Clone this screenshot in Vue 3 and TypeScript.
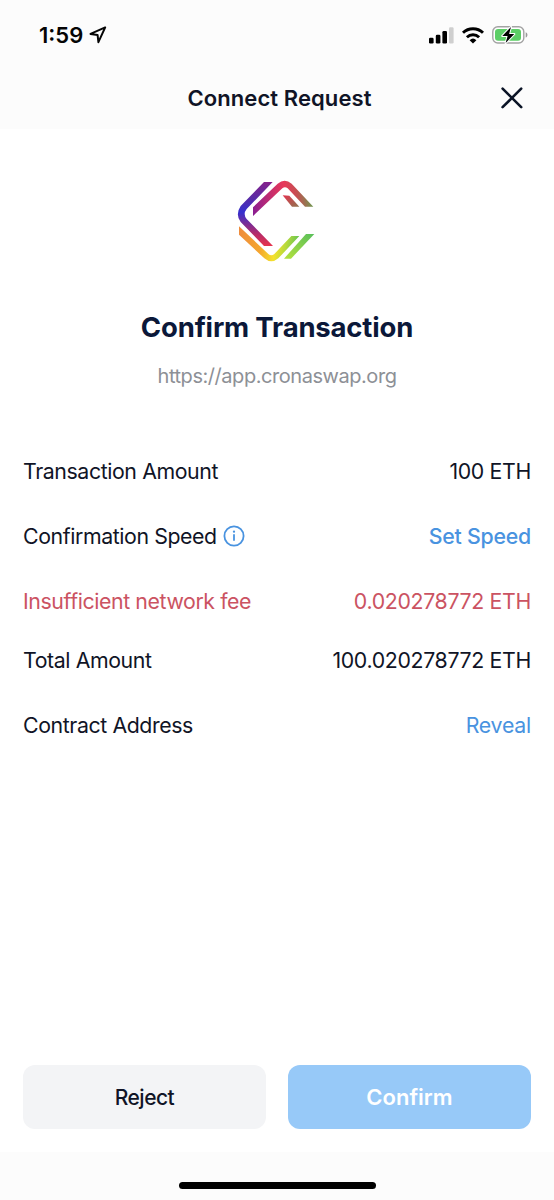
<script setup lang="ts">
interface Row {
  id: string
  label: string
  value: string
  kind?: 'link' | 'error'
  strong?: boolean
  info?: boolean
}

const rows: Row[] = [
  { id: 'amount', label: 'Transaction Amount', value: '100 ETH' },
  { id: 'speed', label: 'Confirmation Speed', value: 'Set Speed', kind: 'link', strong: true, info: true },
  { id: 'fee', label: 'Insufficient network fee', value: '0.020278772 ETH', kind: 'error' },
  { id: 'total', label: 'Total Amount', value: '100.020278772 ETH' },
  { id: 'contract', label: 'Contract Address', value: 'Reveal', kind: 'link' },
]
</script>

<template>
  <div class="screen">
    <header class="top">
      <div class="status">
        <div class="clock">
          <span class="time">1:59</span>
          <svg class="location" viewBox="0 0 18 18">
            <path d="M16.2 1.4 1.5 7.9l7.1 1.1.8 7.2z" />
          </svg>
        </div>
        <div class="indicators">
          <svg class="signal" viewBox="0 0 25 17">
            <rect x="0" y="10.8" width="4.6" height="5.7" rx="1.3" />
            <rect x="6.8" y="7.8" width="4.6" height="8.7" rx="1.3" />
            <rect x="13.4" y="4" width="4.6" height="12.5" rx="1.3" />
            <rect class="dim" x="20" y="0.3" width="4.6" height="16.2" rx="1.3" />
          </svg>
          <svg class="wifi" viewBox="0 0 24 17">
            <path class="arc" d="M2 5.8a14.3 14.3 0 0 1 20 0M5.9 10.2a8.8 8.8 0 0 1 12.2 0" />
            <path d="M8.6 13.2a5 5 0 0 1 6.8 0L12 16.6z" />
          </svg>
          <svg class="battery" viewBox="0 0 36 18">
            <rect class="shell" x="0.8" y="0.8" width="31" height="16.2" rx="5" />
            <rect class="charge" x="3" y="3" width="26" height="11.8" rx="3" />
            <path class="cap" d="M33.7 6.2c2.3.8 2.3 4.6 0 5.4z" />
            <path class="bolt" d="M19 .9 10.3 10h5.3l-2 7.1L22.3 8h-5.2z" />
          </svg>
        </div>
      </div>
      <div class="title-bar">
        <h1 class="title">Connect Request</h1>
        <svg class="close" viewBox="0 0 22 22">
          <path d="M1.6 1.6l18.6 18.6M20.2 1.6 1.6 20.2" />
        </svg>
      </div>
    </header>

    <main class="content">
      <svg class="logo" viewBox="0 0 330 330">
        <defs>
          <linearGradient id="left" gradientUnits="userSpaceOnUse" x1="145" y1="51" x2="145" y2="243">
            <stop offset="0" stop-color="#85218b" />
            <stop offset="0.25" stop-color="#5a2ba5" />
            <stop offset="0.47" stop-color="#3530cf" />
            <stop offset="0.66" stop-color="#7b2b94" />
            <stop offset="0.82" stop-color="#b82c68" />
            <stop offset="1" stop-color="#e6344d" />
          </linearGradient>
          <linearGradient id="upper" gradientUnits="userSpaceOnUse" x1="99" y1="140" x2="280" y2="120">
            <stop offset="0" stop-color="#8a1d91" />
            <stop offset="0.3" stop-color="#c12c70" />
            <stop offset="0.55" stop-color="#e8385a" />
            <stop offset="0.75" stop-color="#c54f52" />
            <stop offset="1" stop-color="#6c9a50" />
          </linearGradient>
          <linearGradient id="inner" x1="0" y1="0" x2="1" y2="1">
            <stop offset="0" stop-color="#e2324e" />
            <stop offset="1" stop-color="#8f7550" />
          </linearGradient>
          <linearGradient id="lower" gradientUnits="userSpaceOnUse" x1="57" y1="200" x2="238" y2="225">
            <stop offset="0" stop-color="#ee8b3d" />
            <stop offset="0.38" stop-color="#f5a62f" />
            <stop offset="0.62" stop-color="#f4e12d" />
            <stop offset="0.8" stop-color="#b5d93b" />
            <stop offset="1" stop-color="#62c354" />
          </linearGradient>
          <linearGradient id="tail" x1="0" y1="1" x2="1" y2="0">
            <stop offset="0" stop-color="#b6e23b" />
            <stop offset="1" stop-color="#58bf5b" />
          </linearGradient>
        </defs>
        <path fill="url(#left)" d="M132 51h26L80 132q-12 15 0 30l79 81h-27L62 171q-17-23 0-48z" />
        <path fill="url(#upper)" d="M99 153v-26l74-71q21-18 42 0l65 69h-25l-52-55q-8-7-16 0z" />
        <path fill="url(#inner)" d="M188 91l20 1 30 33h-22z" />
        <path fill="url(#lower)" d="M57 184v25l76 71q21 18 42 0l63-67h-24l-51 54q-9 8-18 0z" />
        <path fill="url(#tail)" d="M258 207h25l-70 74h-21z" />
      </svg>
      <h2 class="headline">Confirm Transaction</h2>
      <p class="origin">https://app.cronaswap.org</p>

      <dl class="details">
        <div v-for="row in rows" :key="row.id" class="row" :class="[row.id, row.kind]">
          <dt class="label">
            <span>{{ row.label }}</span>
            <svg v-if="row.info" class="info" viewBox="0 0 22 22">
              <circle class="ring" cx="11" cy="11" r="9.6" />
              <circle cx="11" cy="6.7" r="1.15" />
              <path class="stem" d="M11 9.3v6.5" />
            </svg>
          </dt>
          <dd class="value" :class="{ strong: row.strong }">{{ row.value }}</dd>
        </div>
      </dl>

      <div class="actions">
        <button type="button" class="button reject">Reject</button>
        <button type="button" class="button confirm">Confirm</button>
      </div>
    </main>

    <footer class="bottom"><span class="home"></span></footer>
  </div>
</template>

<style>
body {
  margin: 0;
  background: #fff;
}
</style>

<style scoped>
.screen {
  width: 554px;
  height: 1200px;
  display: flex;
  flex-direction: column;
  background: #fff;
  color: #101426;
  font-family: Inter, "Liberation Sans", sans-serif;
  overflow: hidden;
}
.top {
  height: 129px;
  background: #fcfcfc;
}
.status {
  height: 70px;
  display: flex;
  justify-content: space-between;
  box-sizing: border-box;
  padding: 0 26px 0 39px;
}
.clock,
.indicators {
  display: flex;
  align-items: center;
}
.time {
  width: 50px;
  font-size: 22px;
  line-height: 70px;
  font-weight: 600;
  color: #050505;
  white-space: nowrap;
}
.location {
  width: 18px;
  height: 18px;
  fill: none;
  stroke: #050505;
  stroke-width: 2;
  stroke-linejoin: round;
}
.signal {
  width: 25px;
  height: 17px;
  margin-right: 7px;
}
.signal .dim {
  fill: #cfcfcf;
}
.wifi {
  width: 24px;
  height: 17px;
  margin-right: 7px;
}
.arc {
  fill: none;
  stroke: #000;
  stroke-width: 2.9;
}
.battery {
  width: 36px;
  height: 18px;
  overflow: visible;
}
.shell {
  fill: #fff;
  stroke: #a3a3a3;
  stroke-width: 1.4;
}
.charge {
  fill: #5cce66;
}
.cap {
  fill: #9a9a9a;
}
.bolt {
  fill: #000;
  stroke: #fff;
  stroke-width: 2;
  paint-order: stroke;
  stroke-linejoin: round;
}
.title-bar {
  height: 55px;
  display: grid;
  grid-template-columns: 1fr auto 1fr;
  align-items: center;
  padding: 0 31.5px;
}
.title {
  grid-column: 2;
  margin: 0;
  font-size: 22px;
  line-height: 30px;
  font-weight: 600;
  letter-spacing: 0.08px;
  white-space: nowrap;
  margin-left: 5px;
}
.close {
  width: 22px;
  height: 22px;
  justify-self: end;
  fill: none;
  stroke: #0b1426;
  stroke-width: 2.6;
  stroke-linecap: round;
}
.content {
  height: 1023px;
  display: flex;
  flex-direction: column;
}
.logo {
  width: 110px;
  height: 110px;
  margin: 36px 0 0 220px;
}
.headline {
  margin: 34px 0 0;
  font-size: 27.5px;
  line-height: 36px;
  font-weight: 700;
  letter-spacing: -0.18px;
  text-align: center;
  color: #0b1839;
}
.origin {
  margin: 16px 0 0;
  font-size: 20px;
  line-height: 30px;
  letter-spacing: -0.45px;
  text-align: center;
  color: #8d9096;
}
.details {
  margin: 47px 23px 0;
}
.row {
  height: 65px;
  display: flex;
  justify-content: space-between;
  align-items: center;
  font-size: 21.3px;
  line-height: 30px;
  white-space: nowrap;
}
.row.fee {
  color: #cb5362;
}
.row.total {
  height: 53px;
}
.row.contract {
  margin-top: 6px;
}
.label {
  display: flex;
  align-items: center;
  gap: 6px;
  letter-spacing: -0.4px;
}
.value {
  margin: 0;
  letter-spacing: -0.33px;
}
.strong {
  font-weight: 500;
}
.link .value {
  color: #4993e0;
  letter-spacing: -0.22px;
}
.info {
  width: 22px;
  height: 22px;
  fill: #4993e0;
}
.ring,
.stem {
  fill: none;
  stroke: #4993e0;
  stroke-width: 1.8;
}
.actions {
  display: grid;
  grid-template-columns: 1fr 1fr;
  gap: 22px;
  margin: auto 23px 23px;
}
.button {
  height: 64px;
  padding: 0;
  border: 0;
  border-radius: 12px;
  font-family: inherit;
  font-size: 21px;
}
.reject {
  background: #f3f4f6;
  color: #101426;
  font-weight: 500;
  letter-spacing: -0.5px;
}
.confirm {
  background: #97c9f8;
  color: #fff;
  font-size: 22px;
  font-weight: 600;
}
.bottom {
  flex: 1;
  display: flex;
  justify-content: center;
  align-items: flex-start;
  background: #fcfcfc;
}
.home {
  width: 197px;
  height: 7px;
  margin: 29.5px 0 0 1px;
  border-radius: 4px;
  background: #000;
}
</style>
